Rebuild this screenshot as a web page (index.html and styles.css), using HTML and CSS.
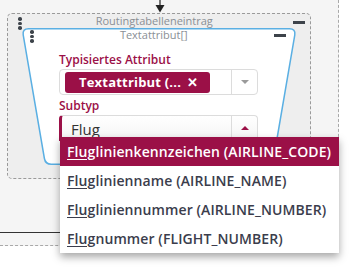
FILE: index.html
```html
<!DOCTYPE html>
<html lang="de">
<head>
  <meta charset="UTF-8">
  <title>Routingtabelleneintrag</title>
  <link rel="stylesheet" href="styles.css">
</head>
<body>
  <div class="canvas">
    <svg class="edge-in" width="12" height="13" viewBox="0 0 12 13">
      <line x1="6" y1="0" x2="6" y2="6" stroke="#222" stroke-width="1.2"/>
      <path d="M1.5 5 H10.5 L6 12.5 Z" fill="#222"/>
    </svg>
    <div class="edge-out"></div>

    <div class="group">
      <div class="node-head">
        <span class="dots"><i></i><i></i><i></i></span>
        <span class="node-title">Routingtabelleneintrag</span>
        <span class="minus"></span>
      </div>

      <div class="card">
        <svg class="card-shape" width="274" height="137" viewBox="0 0 274 137">
          <path d="M6.5 0.75 H267.5 Q273.6 0.75 272.8 6.8 L251.6 130.5 Q250.6 136.25 244.8 136.25 H29.2 Q23.4 136.25 22.4 130.5 L1.2 6.8 Q0.4 0.75 6.5 0.75 Z" fill="#fff" stroke="#5aafe3" stroke-width="1.5"/>
        </svg>
        <div class="node-head card-head">
          <span class="dots"><i></i><i></i><i></i></span>
          <span class="node-title">Textattribut[]</span>
          <span class="minus"></span>
        </div>
        <div class="form">
          <label class="field-label">Typisiertes Attribut</label>
          <div class="select">
            <div class="select-value">
              <span class="chip">Textattribut (... <b>&#10005;</b></span>
            </div>
            <div class="select-arrow"><span class="caret down"></span></div>
          </div>
          <label class="field-label">Subtyp</label>
          <div class="select open">
            <div class="select-value"><span class="plain">Flug</span></div>
            <div class="select-arrow"><span class="caret up"></span></div>
          </div>
        </div>
      </div>
    </div>
  </div>

  <ul class="menu">
    <li class="active"><u>Flug</u>linienkennzeichen (AIRLINE_CODE)</li>
    <li><u>Flug</u>linienname (AIRLINE_NAME)</li>
    <li><u>Flug</u>liniennummer (AIRLINE_NUMBER)</li>
    <li><u>Flug</u>nummer (FLIGHT_NUMBER)</li>
  </ul>
</body>
</html>
```

FILE: styles.css
```css
body {
  margin: 0;
  background: #fff;
  font-family: 'Open Sans', 'Noto Sans', Arial, sans-serif;
  color: #333;
  width: 353px;
  height: 270px;
  overflow: hidden;
  position: relative;
}
.canvas {
  position: relative;
  box-sizing: border-box;
  width: 339px;
  height: 246px;
  background: #f5f5f5;
  border-right: 1px dashed #a9a9a9;
  border-bottom: 1px dashed #a9a9a9;
  padding: 13px 0 0 7px;
}
.edge-in {
  position: absolute;
  left: 154px;
  top: 0;
}
.edge-out {
  position: absolute;
  left: 0;
  top: 232px;
  width: 70px;
  height: 1px;
  background: #333;
}
.group {
  box-sizing: border-box;
  width: 304px;
  height: 166px;
  border: 1px dashed #9a9a9a;
  border-radius: 5px;
  background: #eeeeee;
  padding: 0 0 0 14px;
}
.node-head {
  display: flex;
  align-items: flex-start;
  height: 14px;
  margin-left: -14px;
}
.dots {
  display: flex;
  flex-direction: column;
  gap: 1px;
  margin: 3px 0 0 10px;
}
.dots i {
  width: 3.5px;
  height: 3.5px;
  border-radius: 50%;
  background: #3d434a;
}
.node-title {
  flex: 1;
  text-align: center;
  font-size: 11px;
  line-height: 12px;
  margin-top: 1px;
  color: #8a8f95;
  padding-right: 6px;
}
.minus {
  width: 12px;
  height: 2.5px;
  background: #3d434a;
  margin: 7px 5px 0 0;
}
.card {
  position: relative;
  width: 274px;
  height: 137px;
}
.card-shape {
  position: absolute;
  left: 0;
  top: 0;
}
.card-head {
  position: relative;
  margin-left: 0;
  height: 16px;
}
.card-head .dots {
  margin: 2px 0 0 8px;
}
.card-head .node-title {
  margin-top: 1px;
  padding-right: 0;
}
.card-head .minus {
  margin: 6px 10px 0 0;
}
.form {
  position: relative;
  display: flex;
  flex-direction: column;
  width: 199px;
  margin-left: 37px;
  padding-top: 9px;
}
.field-label {
  font-size: 12px;
  line-height: 14px;
  font-weight: 600;
  color: #9b1047;
  margin-bottom: 2px;
}
.select {
  display: flex;
  box-sizing: border-box;
  height: 26px;
  border: 1px solid #dcdcdc;
  border-radius: 4px;
  background: #fff;
  margin-bottom: 4px;
}
.select.open {
  border-left: 3px solid #9b1047;
  border-bottom: none;
  border-radius: 4px 4px 0 0;
  background: linear-gradient(#fff, #f4f4f4);
}
.select-value {
  flex: 1;
  display: flex;
  align-items: center;
  padding-left: 5px;
}
.chip {
  display: flex;
  align-items: center;
  justify-content: space-between;
  box-sizing: border-box;
  width: 145px;
  height: 21px;
  padding: 0 12px 0 14px;
  background: #9b1047;
  color: #fff;
  border-radius: 3px;
  font-size: 13px;
  font-weight: 700;
  letter-spacing: 0.2px;
}
.chip b {
  font-size: 13px;
}
.plain {
  font-size: 15px;
  padding-left: 4px;
  color: #333;
  font-weight: 500;
}
.select-arrow {
  width: 25px;
  border-left: 1px solid #dcdcdc;
  display: flex;
  align-items: center;
  justify-content: center;
}
.caret {
  width: 0;
  height: 0;
  border-left: 4px solid transparent;
  border-right: 4px solid transparent;
}
.caret.down {
  border-top: 4px solid #9a9a9a;
}
.caret.up {
  border-bottom: 4px solid #9b1047;
  margin-top: -2px;
}
.menu {
  position: absolute;
  left: 60px;
  top: 137px;
  width: 279px;
  margin: 0;
  padding: 0;
  list-style: none;
  background: #fff;
  box-shadow: 0 4px 8px rgba(0, 0, 0, 0.35);
}
.menu li {
  height: 29px;
  line-height: 29px;
  padding-left: 7px;
  font-size: 14px;
  font-weight: 600;
  letter-spacing: 0.1px;
  color: #3b3d4c;
  white-space: nowrap;
}
.menu li.active {
  background: #9b1047;
  color: #fff;
}
.menu u {
  text-underline-offset: 2px;
}
```
